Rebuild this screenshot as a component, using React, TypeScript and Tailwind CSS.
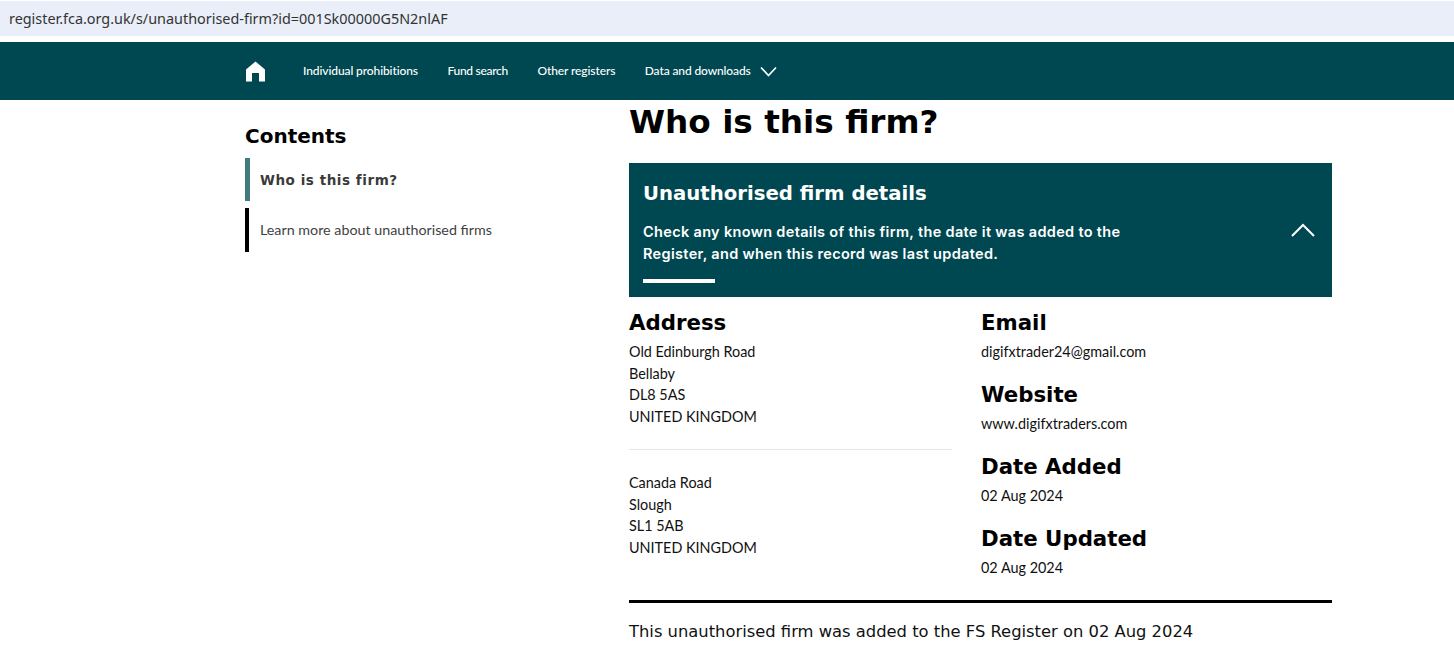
const lato = "font-['Lato',sans-serif]";
const dejavu = "font-['DejaVu_Sans',sans-serif]";

const navLinks = [
  { label: "Individual prohibitions", className: "tracking-[-0.1px]" },
  { label: "Fund search", className: "tracking-[-0.3px]" },
  { label: "Other registers", className: "tracking-[-0.1px]" },
];

function Detail({ label, value }: { label: string; value: string }) {
  return (
    <div className="h-[72px]">
      <h3 className={`${dejavu} text-[21.3px] leading-[26px] font-bold text-black`}>{label}</h3>
      <p className={`${lato} mt-[5px] text-[14.4px] leading-[22px] text-[#111]`}>{value}</p>
    </div>
  );
}

function AddressBlock({ lines }: { lines: string[] }) {
  return (
    <div className={`${lato} text-[14.4px] leading-[21.5px] text-[#111]`}>
      {lines.map((line, index) => (
        <div key={index}>{line}</div>
      ))}
    </div>
  );
}

export default function App() {
  return (
    <div className="h-[649px] w-full overflow-hidden bg-white">
      <div className="mt-px flex h-[35px] items-center bg-[#e9eef8] pl-[9px]">
        <span className="font-['Noto_Sans',sans-serif] text-[14.4px] text-[#333]">
          register.fca.org.uk/s/unauthorised-firm?id=001Sk00000G5N2nlAF
        </span>
      </div>

      <nav className="mt-[6px] flex h-[58px] items-center bg-[#004851] pl-[245px] text-white">
        <svg width="21" height="21" viewBox="0 0 21 21" fill="white">
          <path d="M10.5 0.5 L20 8.5 V20.5 H14 V12 H7 V20.5 H1 V8.5 Z" />
        </svg>
        <div className={`${lato} ml-[37px] flex items-center gap-[29.5px] text-[12px] font-medium`}>
          {navLinks.map((link) => (
            <span key={link.label} className={link.className}>
              {link.label}
            </span>
          ))}
          <span className="flex items-center gap-[9px] tracking-[-0.12px]">
            Data and downloads
            <svg width="17" height="11" viewBox="0 0 17 11" fill="none" stroke="white" strokeWidth="1.7">
              <path d="M1 1.5 L8.5 9.5 L16 1.5" />
            </svg>
          </span>
        </div>
      </nav>

      <div className="flex pl-[245px]">
        <aside className="w-[384px] shrink-0 pt-[24px]">
          <h2 className={`${dejavu} text-[20px] leading-[24px] font-bold text-black`}>Contents</h2>
          <div className="mt-[10px] flex h-[43px] items-center border-l-[5px] border-[#417a80] pl-[10px] pt-[2px]">
            <span className={`${dejavu} text-[13.5px] font-bold tracking-[0.55px] text-[#3a3a3a]`}>Who is this firm?</span>
          </div>
          <div className="mt-[7px] flex h-[44px] items-center border-l-[4px] border-black pl-[11px]">
            <span className={`${lato} text-[14.3px] text-[#3f3f3f]`}>Learn more about unauthorised firms</span>
          </div>
        </aside>

        <main className="w-[703px] shrink-0">
          <h1 className={`${dejavu} mt-[2px] text-[32.7px] leading-[40px] font-bold text-black`}>Who is this firm?</h1>

          <section className="relative mt-[21px] h-[134px] bg-[#004851] pl-[14px] pt-[18px] text-white">
            <h2 className={`${dejavu} text-[19.7px] leading-[26px] font-bold`}>Unauthorised firm details</h2>
            <p className="mt-[14px] w-[500px] font-['Inter',sans-serif] text-[14.5px] leading-[21.5px] font-semibold tracking-[0.33px]">
              Check any known details of this firm, the date it was added to the Register, and when this record was last updated.
            </p>
            <div className="absolute bottom-[14px] left-[14px] h-[4px] w-[72px] bg-white" />
            <svg className="absolute right-[17px] top-[60px]" width="24" height="14" viewBox="0 0 24 14" fill="none" stroke="white" strokeWidth="2">
              <path d="M1 13 L12 2 L23 13" />
            </svg>
          </section>

          <div className="mt-[13px] flex">
            <div className="w-[323px] shrink-0">
              <h3 className={`${dejavu} text-[21.3px] leading-[26px] font-bold text-black`}>Address</h3>
              <div className="mt-[5px]">
                <AddressBlock lines={["Old Edinburgh Road", "Bellaby", "DL8 5AS", "UNITED KINGDOM"]} />
              </div>
              <hr className="mt-[22px] border-[#e5e5e5]" />
              <div className="mt-[22px]">
                <AddressBlock lines={["Canada Road", "Slough", "SL1 5AB", "UNITED KINGDOM"]} />
              </div>
            </div>
            <div className="ml-[29px]">
              <Detail label="Email" value="digifxtrader24@gmail.com" />
              <Detail label="Website" value="www.digifxtraders.com" />
              <Detail label="Date Added" value="02 Aug 2024" />
              <Detail label="Date Updated" value="02 Aug 2024" />
            </div>
          </div>

          <div className="mt-[2px] h-[3px] bg-black" />
          <p className={`${dejavu} mt-[18px] text-[16.35px] leading-[22px] text-[#111]`}>
            This unauthorised firm was added to the FS Register on 02 Aug 2024
          </p>
        </main>
      </div>
    </div>
  );
}
